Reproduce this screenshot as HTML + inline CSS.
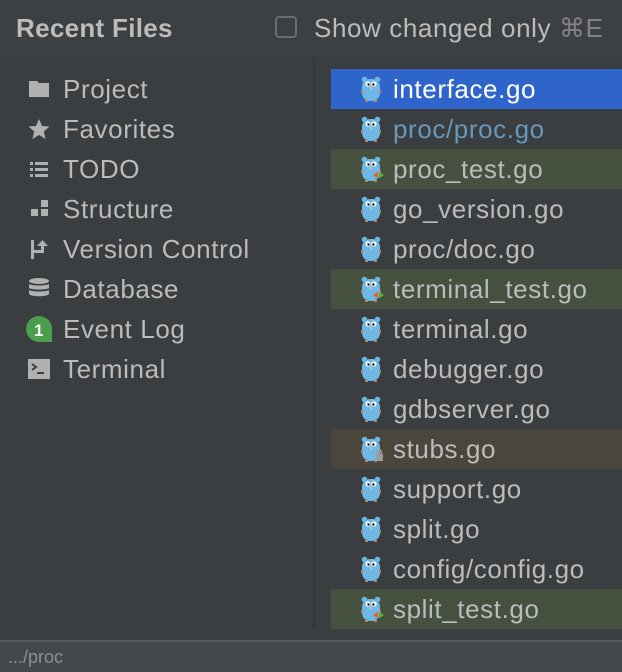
<!DOCTYPE html><html><head><style>
body{margin:0;width:622px;height:672px;background:#3b3e41;font-family:"Liberation Sans",sans-serif;overflow:hidden;position:relative;color:#bbbbbb}
.hdr{position:absolute;left:0;top:0;width:622px;height:56px;background:#3d4043}
.title{position:absolute;left:16px;top:13px;font-size:26px;letter-spacing:0.3px;font-weight:bold;color:#bcbcbc}
.cb{position:absolute;left:275px;top:16px;width:22px;height:22px;border:2px solid #6b6e70;border-radius:4px;box-sizing:border-box}
.sco{position:absolute;left:314px;top:13px;font-size:26px;letter-spacing:0.6px;color:#bcbcbc}
.sco span{color:#808284}
.vdiv{position:absolute;left:313px;top:58px;width:2px;height:570px;background:#333537}
.item{position:absolute;height:40px;line-height:41px;font-size:26px;letter-spacing:0.6px;color:#bbbbbb}
.l{left:0;padding-left:63px}
.ico{position:absolute;left:28px;width:22px;height:22px}
.r{left:331px;width:291px;padding-left:62px;box-sizing:border-box}
.gopher{position:absolute;left:30px;top:7px;width:20px;height:27px}
.status{position:absolute;left:0;top:640px;width:622px;height:32px;background:#45484a;border-top:2px solid #595c5e;box-sizing:border-box;font-size:18px;color:#8d8f91;padding-left:8px;line-height:30px}
</style></head><body>
<div class="hdr"><div class="title">Recent Files</div><div class="cb"></div><div class="sco">Show changed only <span>⌘E</span></div></div>
<div class="vdiv"></div>
<svg width="0" height="0" style="position:absolute"><defs>
<g id="g"><rect x="1" y="3" width="18" height="22" rx="8" fill="#6fb8e6"/><circle cx="3.5" cy="3.5" r="2.8" fill="#6fb8e6"/><circle cx="16.5" cy="3.5" r="2.8" fill="#6fb8e6"/><circle cx="7" cy="8" r="2.6" fill="#fff"/><circle cx="13" cy="8" r="2.6" fill="#fff"/><circle cx="7.5" cy="8.5" r="1.2" fill="#111"/><circle cx="12.5" cy="8.5" r="1.2" fill="#111"/><rect x="9" y="11" width="2" height="2" fill="#d9c6a0"/><rect x="0" y="14" width="2" height="3" fill="#b08a70"/><rect x="18" y="14" width="2" height="3" fill="#b08a70"/><rect x="4" y="24" width="3" height="2" fill="#b08a70"/><rect x="13" y="24" width="3" height="2" fill="#b08a70"/></g>
<g id="t"><path d="M12 19 L17 15.5 L17 22.5Z" fill="#e0622e"/><path d="M18 15.5 L23 19 L18 22.5Z" fill="#5bab3a"/></g>
</defs></svg>

<div class="item l" style="top:69px"><svg class="ico" style="top:9px" viewBox="0 0 22 22"><path d="M1 3h8l2 2h10v14H1z" fill="#aeb0b2"/></svg>Project</div>
<div class="item l" style="top:109px"><svg class="ico" style="top:9px" viewBox="0 0 22 22"><path d="M11 1l3 7 7.5.5-5.7 5 1.8 7.5L11 17l-6.6 4 1.8-7.5-5.7-5L8 8z" fill="#aeb0b2"/></svg>Favorites</div>
<div class="item l" style="top:149px"><svg class="ico" style="top:9px" viewBox="0 0 22 22" fill="#aeb0b2"><rect x="2" y="4" width="3" height="3"/><rect x="7" y="4" width="13" height="3"/><rect x="2" y="10" width="3" height="3"/><rect x="7" y="10" width="13" height="3"/><rect x="2" y="16" width="3" height="3"/><rect x="7" y="16" width="13" height="3"/></svg>TODO</div>
<div class="item l" style="top:189px"><svg class="ico" style="top:9px" viewBox="0 0 22 22" fill="#aeb0b2"><rect x="13" y="2" width="7" height="7"/><rect x="3" y="11" width="7" height="7"/><rect x="13" y="11" width="7" height="7"/></svg>Structure</div>
<div class="item l" style="top:229px"><svg class="ico" style="top:9px" viewBox="0 0 22 22" fill="#aeb0b2"><rect x="3" y="2" width="3" height="19"/><rect x="3" y="12" width="13" height="3"/><rect x="13" y="7" width="3" height="8"/><path d="M9 8l5.5-6L20 8z"/></svg>Version Control</div>
<div class="item l" style="top:269px"><svg class="ico" style="top:8px" viewBox="0 0 22 22" fill="#aeb0b2"><ellipse cx="11" cy="4" rx="10" ry="3"/><path d="M1 7c2 2 18 2 20 0v4c-2 2-18 2-20 0z"/><path d="M1 13c2 2 18 2 20 0v4c-2 3-18 3-20 0z"/></svg>Database</div>
<div class="item l" style="top:309px"><svg class="ico" style="top:7px;left:26px;width:26px;height:26px" viewBox="0 0 26 26"><path d="M13 0a13 13 0 1 0 0 26h13V13A13 13 0 0 0 13 0z" fill="#4a9e4c"/><text x="13" y="20" font-size="17" font-weight="bold" fill="#fff" text-anchor="middle" font-family="Liberation Sans">1</text></svg>Event Log</div>
<div class="item l" style="top:349px"><svg class="ico" style="top:9px" viewBox="0 0 22 22"><rect x="0" y="1" width="22" height="20" fill="#aeb0b2"/><path d="M4 6l4 3-4 3" stroke="#3b3e41" stroke-width="2" fill="none"/><rect x="9" y="14" width="7" height="2" fill="#3b3e41"/></svg>Terminal</div>

<div class="item r" style="top:69px;background:#2f65ca;color:#fff"><svg class="gopher" viewBox="0 0 20 27"><use href="#g"/></svg>interface.go</div>
<div class="item r" style="top:109px;color:#6897bb"><svg class="gopher" viewBox="0 0 20 27"><use href="#g"/></svg>proc/proc.go</div>
<div class="item r" style="top:149px;background:#45503f"><svg class="gopher" viewBox="0 0 24 27" style="width:24px"><use href="#g"/><use href="#t"/></svg>proc_test.go</div>
<div class="item r" style="top:189px"><svg class="gopher" viewBox="0 0 20 27"><use href="#g"/></svg>go_version.go</div>
<div class="item r" style="top:229px"><svg class="gopher" viewBox="0 0 20 27"><use href="#g"/></svg>proc/doc.go</div>
<div class="item r" style="top:269px;background:#45503f"><svg class="gopher" viewBox="0 0 24 27" style="width:24px"><use href="#g"/><use href="#t"/></svg>terminal_test.go</div>
<div class="item r" style="top:309px"><svg class="gopher" viewBox="0 0 20 27"><use href="#g"/></svg>terminal.go</div>
<div class="item r" style="top:349px"><svg class="gopher" viewBox="0 0 20 27"><use href="#g"/></svg>debugger.go</div>
<div class="item r" style="top:389px"><svg class="gopher" viewBox="0 0 20 27"><use href="#g"/></svg>gdbserver.go</div>
<div class="item r" style="top:429px;background:#4a463c"><svg class="gopher" viewBox="0 0 24 27" style="width:24px"><use href="#g"/><rect x="15" y="18" width="7" height="7" fill="#9a9a9a"/><path d="M16.5 18v-2a2 2 0 0 1 4 0v2" stroke="#9a9a9a" stroke-width="1.3" fill="none"/></svg>stubs.go</div>
<div class="item r" style="top:469px"><svg class="gopher" viewBox="0 0 20 27"><use href="#g"/></svg>support.go</div>
<div class="item r" style="top:509px"><svg class="gopher" viewBox="0 0 20 27"><use href="#g"/></svg>split.go</div>
<div class="item r" style="top:549px"><svg class="gopher" viewBox="0 0 20 27"><use href="#g"/></svg>config/config.go</div>
<div class="item r" style="top:589px;background:#45503f"><svg class="gopher" viewBox="0 0 24 27" style="width:24px"><use href="#g"/><use href="#t"/></svg>split_test.go</div>

<div class="status">.../proc</div>
</body></html>
